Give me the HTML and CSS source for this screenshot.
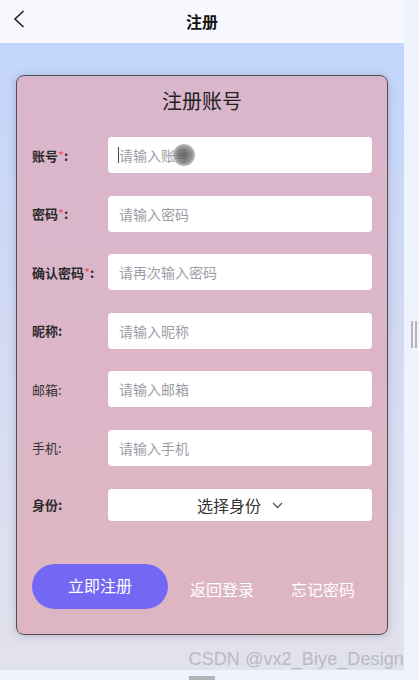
FILE: index.html
```html
<!DOCTYPE html>
<html lang="zh-CN">
<head>
<meta charset="utf-8">
<title>注册</title>
<link rel="stylesheet" href="styles.css">
</head>
<body>
<div class="screen">
  <div class="app">
    <header class="topbar">
      <svg class="back" width="12" height="18" viewBox="0 0 12 18"><path d="M10.5 1 L2 9 L10.5 17" fill="none" stroke="#222" stroke-width="1.6"/></svg>
      <div class="topbar-title">注册</div>
    </header>
    <main class="main">
      <section class="card">
        <h1 class="card-title">注册账号</h1>
        <div class="form">
          <div class="row">
            <label class="label bold">账号<span class="req">*</span>:</label>
            <div class="input focus"><span class="caret"></span>请输入账号<span class="cursor-dot"></span></div>
          </div>
          <div class="row">
            <label class="label bold">密码<span class="req">*</span>:</label>
            <div class="input">请输入密码</div>
          </div>
          <div class="row">
            <label class="label bold">确认密码<span class="req">*</span>:</label>
            <div class="input">请再次输入密码</div>
          </div>
          <div class="row">
            <label class="label bold">昵称:</label>
            <div class="input">请输入昵称</div>
          </div>
          <div class="row">
            <label class="label">邮箱:</label>
            <div class="input">请输入邮箱</div>
          </div>
          <div class="row">
            <label class="label">手机:</label>
            <div class="input">请输入手机</div>
          </div>
          <div class="row row-select">
            <label class="label bold">身份:</label>
            <div class="select">选择身份<svg class="chev" width="11" height="7" viewBox="0 0 11 7"><path d="M1 1 L5.5 5.5 L10 1" fill="none" stroke="#555" stroke-width="1.3"/></svg></div>
          </div>
        </div>
        <div class="actions">
          <button class="btn-primary">立即注册</button>
          <span class="link">返回登录</span>
          <span class="link">忘记密码</span>
        </div>
      </section>
      <div class="watermark">CSDN @vx2_Biye_Design</div>
    </main>
    <div class="bottom"><span class="bottom-tab"></span></div>
  </div>
  <div class="side"><span class="grip"></span></div>
</div>
</body>
</html>
```
FILE: styles.css
```css
* { box-sizing: border-box; margin: 0; padding: 0; }
html, body { width: 419px; height: 680px; overflow: hidden; }
body {
  background: #eef3fd;
  font-family: "Noto Sans CJK SC", "Noto Sans", sans-serif;
  color: #222;
}
.screen { display: flex; height: 680px; }
.app { width: 404px; display: flex; flex-direction: column; height: 680px; }
.topbar {
  height: 43px;
  background: #f7f8fd;
  display: flex;
  align-items: center;
  justify-content: center;
  position: relative;
}
.back { position: absolute; left: 13px; top: 10px; }
.topbar-title { font-size: 16px; font-weight: 700; color: #111; line-height: 1; margin-top: -1px; }
.main {
  position: relative;
  height: 627px;
  background: linear-gradient(180deg, #c3d6fb 0%, #cfd9f5 35%, #dcdff0 75%, #e2e2ec 100%);
  padding: 32px 16px 0 16px;
}
.card {
  width: 372px;
  height: 560px;
  border: 1px solid #505050;
  border-radius: 8px;
  background: linear-gradient(180deg, #dab6cd 0%, #dcb6c8 50%, #deb6c2 100%);
  box-shadow: 0 1px 8px rgba(60, 60, 90, 0.25);
  padding: 11px 15px 0 15px;
}
.card-title {
  text-align: center;
  font-size: 20px;
  font-weight: 400;
  line-height: 28px;
  color: #222;
}
.form { display: flex; flex-direction: column; gap: 22.6px; margin-top: 22px; }
.row { display: flex; align-items: center; height: 36px; }
.row-select { height: 32px; }
.label { width: 76px; font-size: 13px; color: #333; white-space: nowrap; }
.label.bold { font-weight: 700; color: #2a2a2a; }
.req { color: #f25858; font-weight: 400; }
.input {
  position: relative;
  flex: 1;
  height: 36px;
  background: #fff;
  border-radius: 4px;
  padding-left: 11px;
  font-size: 14px;
  line-height: 36px;
  color: #9c9ea5;
}
.caret {
  position: absolute;
  left: 10px;
  top: 10px;
  width: 1px;
  height: 16px;
  background: #444;
}
.cursor-dot {
  position: absolute;
  left: 65px;
  top: 7px;
  width: 22px;
  height: 22px;
  border-radius: 50%;
  background: radial-gradient(circle, rgba(90,90,90,0.9) 0%, rgba(110,110,110,0.75) 50%, rgba(140,140,140,0) 100%);
}
.select {
  flex: 1;
  height: 32px;
  background: #fff;
  border-radius: 4px;
  display: flex;
  align-items: center;
  justify-content: center;
  gap: 11px;
  font-size: 16px;
  color: #333;
}
.chev { margin-top: 1px; }
.actions {
  display: flex;
  align-items: center;
  margin-top: 43px;
}
.btn-primary {
  width: 136px;
  height: 45px;
  border: none;
  border-radius: 23px;
  background: #7467f4;
  color: #fff;
  font-family: inherit;
  font-size: 16px;
  line-height: 1;
  padding-bottom: 3px;
}
.link {
  color: #fff;
  font-size: 16px;
  margin-top: 5px;
}
.link:first-of-type { margin-left: 22px; }
.link + .link { margin-left: 37px; }
.watermark {
  position: absolute;
  right: 0;
  bottom: 0;
  font-family: "Liberation Sans", Arial, sans-serif;
  font-size: 18px;
  color: #b9bac2;
  letter-spacing: 0.1px;
}
.bottom { height: 10px; background: #eef3fd; position: relative; }
.bottom-tab { position: absolute; left: 189px; top: 6px; width: 26px; height: 4px; background: #b4b4b8; }
.side { flex: 1; background: #eef3fd; position: relative; }
.grip {
  position: absolute;
  left: 7px;
  top: 321px;
  width: 6px;
  height: 27px;
  border-left: 2px solid #b5b5ba;
  border-right: 2px solid #b5b5ba;
}
```
